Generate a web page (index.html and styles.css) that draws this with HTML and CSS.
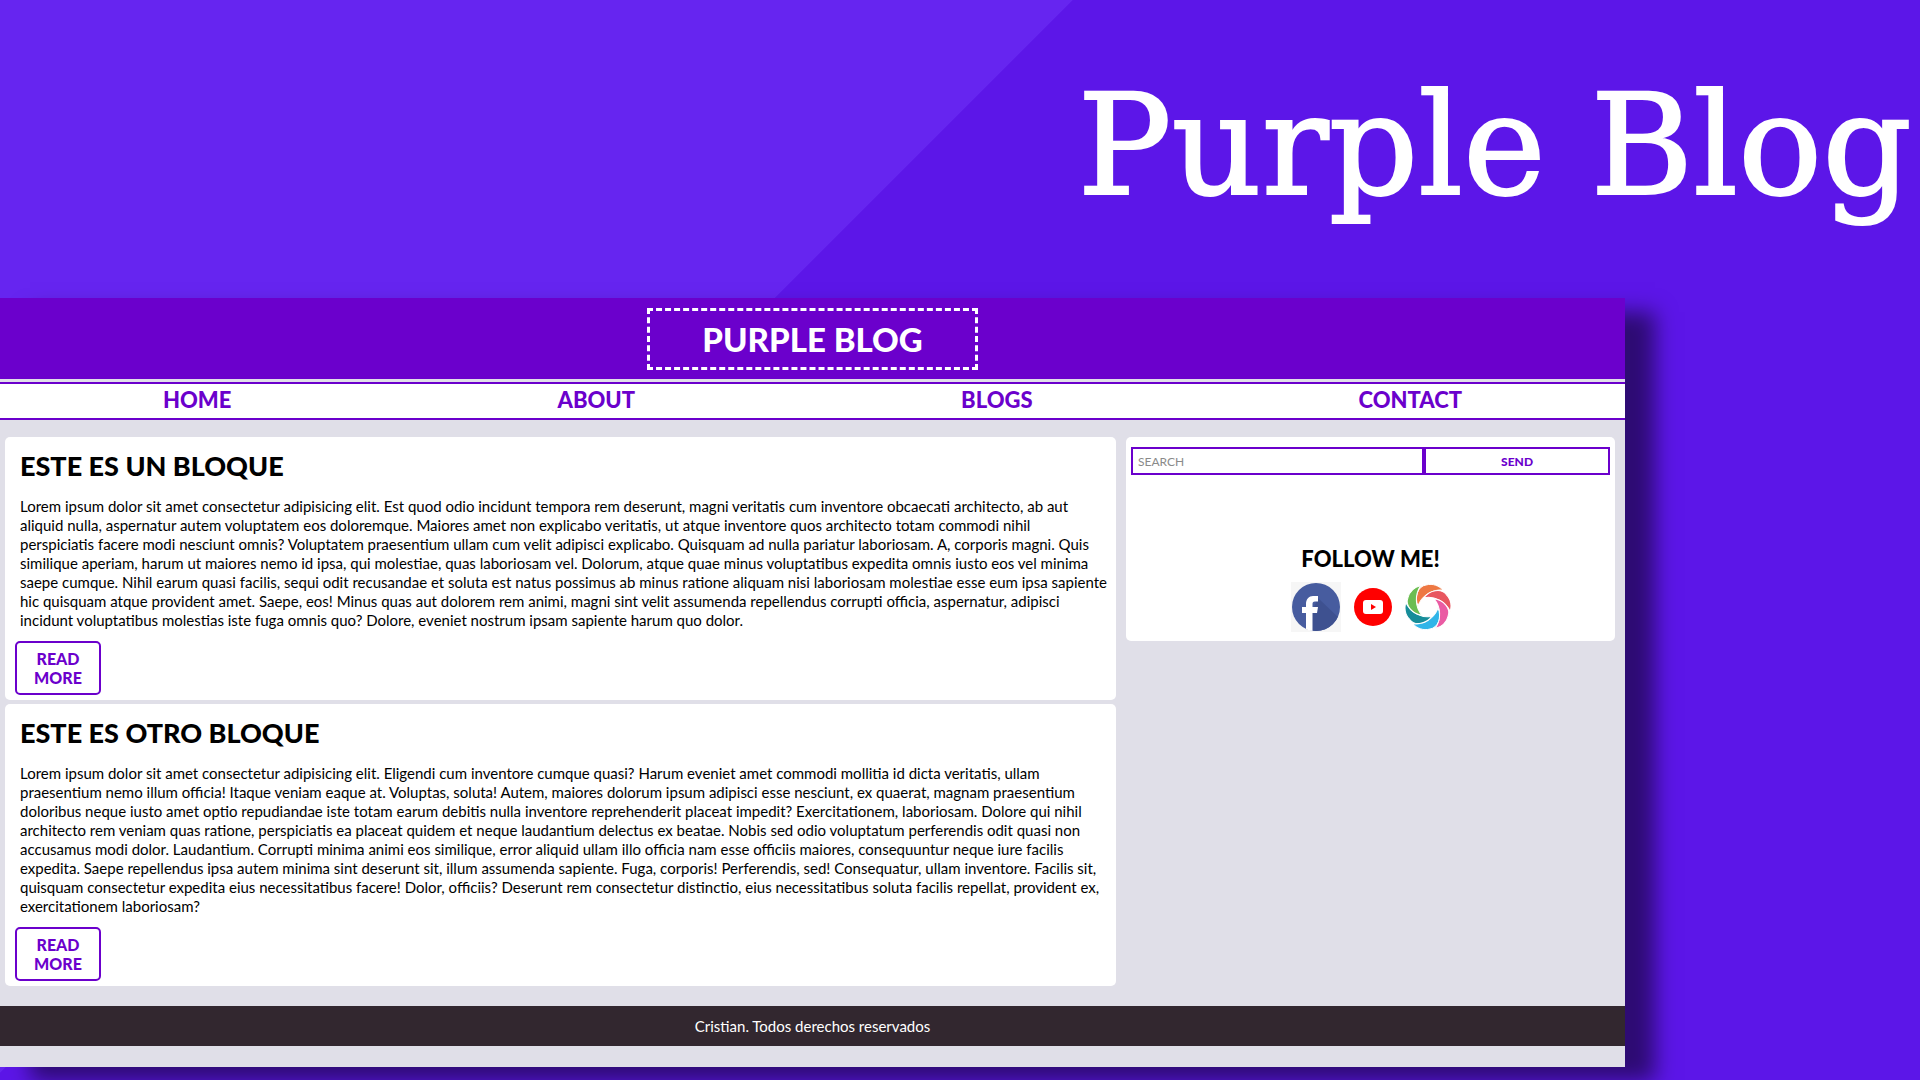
FILE: index.html
```html
<!DOCTYPE html>
<html lang="es">
<head>
<meta charset="utf-8">
<title>Purple Blog</title>
<link rel="stylesheet" href="styles.css">
</head>
<body>
<div class="cover">
  <p class="cover-title">Purple Blog</p>
  <div class="site">
    <header class="site-header"><h1 class="logo">PURPLE BLOG</h1></header>
    <nav class="nav">
      <a href="#">HOME</a><a href="#">ABOUT</a><a href="#">BLOGS</a><a href="#">CONTACT</a>
    </nav>
    <div class="content">
      <main class="posts">
        <article class="card post">
          <h2>ESTE ES UN BLOQUE</h2>
          <p>Lorem ipsum dolor sit amet consectetur adipisicing elit. Est quod odio incidunt tempora rem deserunt, magni veritatis cum inventore obcaecati architecto, ab aut<br>
          aliquid nulla, aspernatur autem voluptatem eos doloremque. Maiores amet non explicabo veritatis, ut atque inventore quos architecto totam commodi nihil<br>
          perspiciatis facere modi nesciunt omnis? Voluptatem praesentium ullam cum velit adipisci explicabo. Quisquam ad nulla pariatur laboriosam. A, corporis magni. Quis<br>
          similique aperiam, harum ut maiores nemo id ipsa, qui molestiae, quas laboriosam vel. Dolorum, atque quae minus voluptatibus expedita omnis iusto eos vel minima<br>
          saepe cumque. Nihil earum quasi facilis, sequi odit recusandae et soluta est natus possimus ab minus ratione aliquam nisi laboriosam molestiae esse eum ipsa sapiente<br>
          hic quisquam atque provident amet. Saepe, eos! Minus quas aut dolorem rem animi, magni sint velit assumenda repellendus corrupti officia, aspernatur, adipisci<br>
          incidunt voluptatibus molestias iste fuga omnis quo? Dolore, eveniet nostrum ipsam sapiente harum quo dolor.</p>
          <button class="more" type="button">READ MORE</button>
        </article>
        <article class="card post">
          <h2>ESTE ES OTRO BLOQUE</h2>
          <p>Lorem ipsum dolor sit amet consectetur adipisicing elit. Eligendi cum inventore cumque quasi? Harum eveniet amet commodi mollitia id dicta veritatis, ullam<br>
          praesentium nemo illum officia! Itaque veniam eaque at. Voluptas, soluta! Autem, maiores dolorum ipsum adipisci esse nesciunt, ex quaerat, magnam praesentium<br>
          doloribus neque iusto amet optio repudiandae iste totam earum debitis nulla inventore reprehenderit placeat impedit? Exercitationem, laboriosam. Dolore qui nihil<br>
          architecto rem veniam quas ratione, perspiciatis ea placeat quidem et neque laudantium delectus ex beatae. Nobis sed odio voluptatum perferendis odit quasi non<br>
          accusamus modi dolor. Laudantium. Corrupti minima animi eos similique, error aliquid ullam illo officia nam esse officiis maiores, consequuntur neque iure facilis<br>
          expedita. Saepe repellendus ipsa autem minima sint deserunt sit, illum assumenda sapiente. Fuga, corporis! Perferendis, sed! Consequatur, ullam inventore. Facilis sit,<br>
          quisquam consectetur expedita eius necessitatibus facere! Dolor, officiis? Deserunt rem consectetur distinctio, eius necessitatibus soluta facilis repellat, provident ex,<br>
          exercitationem laboriosam?</p>
          <button class="more" type="button">READ MORE</button>
        </article>
      </main>
      <aside class="card side">
        <form class="search">
          <input type="text" placeholder="SEARCH" aria-label="Search">
          <button type="button">SEND</button>
        </form>
        <h3>FOLLOW ME!</h3>
        <div class="social">
          <a href="#" aria-label="Facebook"><svg width="50" height="50" viewBox="0 0 50 50">
            <defs><clipPath id="disc"><circle cx="25" cy="25" r="24"/></clipPath></defs>
            <rect width="50" height="50" fill="#f6f6f6"/>
            <circle cx="25" cy="25" r="24" fill="#475c9f"/>
            <path d="M27 16 50 38V50H20V32z" fill="#3e5190" clip-path="url(#disc)"/>
            <path d="M15 47V31H11V25h4V22c0-5 3-8 7-8h5v5.500h-3c-2 0-2.500 1-2.500 2.500v3h5.500l-1 6h-4.500V49q-4 0-6.500-2z" fill="#fff"/>
          </svg></a>
          <a href="#" aria-label="YouTube"><svg width="38" height="38" viewBox="0 0 38 38">
            <circle cx="19" cy="19" r="19" fill="#f00"/>
            <rect x="9" y="12" width="20" height="14" rx="3" fill="#fff"/>
            <path d="M17 16v6l5-3z" fill="#f00"/>
          </svg></a>
          <a href="#" aria-label="SoloLearn"><svg width="46" height="46" viewBox="-23 -23 46 46">
            <defs><path id="blade" d="M-10-1C-14-10-10-21-2-22C5-24 11-21 15-17C4-18-7-11-10-1z" stroke="#fff"/></defs>
            <use href="#blade" fill="#ee7843"/>
            <use href="#blade" fill="#e8565f" transform="rotate(60)"/>
            <use href="#blade" fill="#ea5ba3" transform="rotate(120)"/>
            <use href="#blade" fill="#30b5e8" transform="rotate(180)"/>
            <use href="#blade" fill="#168d99" transform="rotate(240)"/>
            <use href="#blade" fill="#6bbd52" transform="rotate(300)"/>
          </svg></a>
        </div>
      </aside>
    </div>
    <footer class="footer">Cristian. Todos derechos reservados</footer>
  </div>
</div>
</body>
</html>
```
FILE: styles.css
```css
* { box-sizing: border-box; }
body { margin: 0; font-family: Lato, "Liberation Sans", sans-serif; color: #000; }
h1, h2, h3, p { margin: 0; }
h1, h2, h3 { font-weight: 900; }
button, input { font-family: inherit; background: #fff; border: 2px solid #6b00cc; border-radius: 0; }
button { color: #6b00cc; font-weight: 900; }

.cover {
  min-height: 100vh;
  overflow: hidden;
  background: linear-gradient(135deg, #6625f0 758px, #5c16e8 759px);
}
.cover-title {
  padding: 56px 8px 62px 0;
  font-family: "DejaVu Serif", serif;
  font-size: 140px;
  line-height: 180px;
  text-align: right;
  white-space: nowrap;
  color: #fff;
  -webkit-text-stroke: 2px #fff;
}
.site {
  width: 84.64%;
  padding-bottom: 21px;
  background: #e0dfe8;
  box-shadow: 30px 14px 20px rgba(0, 0, 0, .5);
}
.site-header { display: flex; justify-content: center; padding: 10px 0 9px; background: #6b00cc; }
.logo {
  padding: 10px 52px;
  border: 3px dashed #fff;
  font-size: 33px;
  line-height: 36px;
  color: #fff;
}
.nav {
  display: flex;
  justify-content: space-around;
  margin-top: 3px;
  padding: 3px 0 5px;
  border-top: 2px solid #6b00cc;
  border-bottom: 2px solid #6b00cc;
  background: #fff;
}
.nav a { font-size: 22px; line-height: 26px; font-weight: 900; color: #6b00cc; text-decoration: none; }

.content {
  display: grid;
  grid-template-columns: minmax(0, 1111fr) minmax(0, 489fr);
  align-items: start;
  gap: 10px;
  padding: 17px 10px 20px 5px;
}
.posts { display: grid; grid-template-columns: minmax(0, 1fr); gap: 4px; }
.card { border-radius: 5px; background: #fff; }
.post { padding: 13px 10px 5px; }
.post h2 { padding: 0 5px; font-size: 27px; line-height: 32px; }
.post p { padding: 15px 5px 11px; font-size: 15px; line-height: 19px; white-space: nowrap; }
.more {
  display: block;
  width: 86px;
  padding: 6px 12px;
  border-radius: 5px;
  font-size: 16px;
  line-height: 19px;
}

.side { padding: 10px 5px 9px; }
.search { display: grid; grid-template-columns: minmax(0, 293fr) minmax(0, 186fr); }
.search input, .search button { height: 28px; font-size: 12px; }
.search input { padding: 0 5px; }
.search input::placeholder { color: #8a8a8a; }
.side h3 { margin-top: 70px; font-size: 22px; line-height: 28px; text-align: center; }
.social { display: flex; justify-content: center; align-items: center; gap: 13px; margin-top: 9px; }
.social svg { display: block; }

.footer { background: #32272f; color: #fff; text-align: center; font-size: 15px; line-height: 40px; }
```
